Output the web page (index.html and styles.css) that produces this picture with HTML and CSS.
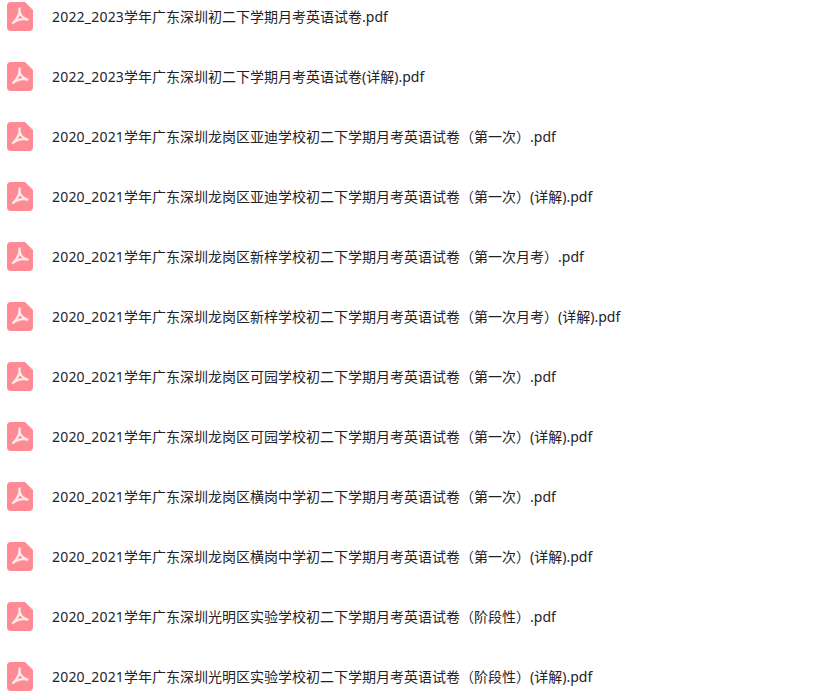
FILE: index.html
```html
<!DOCTYPE html>
<html lang="zh-CN">
<head>
  <meta charset="UTF-8">
  <title>试卷列表</title>
  <link rel="stylesheet" href="styles.css">
</head>
<body>
  <svg class="defs" width="0" height="0" aria-hidden="true">
    <symbol id="pdf" viewBox="0 0 26 29">
      <path d="M4 0H18L26 8V25Q26 29 22 29H4Q0 29 0 25V4Q0 0 4 0Z" fill="#ff8a94"/>
      <path d="M12.5 6.5C13.2 11 10 17 6 21M12.5 6.5C12 11.5 15 16 20.5 17.5M6 21C10 17.5 15 16.5 20.5 17.5" fill="none" stroke="#ffe9eb" stroke-width="2.3" stroke-linecap="round" stroke-linejoin="round"/>
    </symbol>
  </svg>
  <ul class="file-list">
    <li class="file-row"><svg class="file-icon"><use href="#pdf"/></svg><span><span class="year">2022_2023</span>学年广东深圳初二下学期月考英语试卷.pdf</span></li>
    <li class="file-row"><svg class="file-icon"><use href="#pdf"/></svg><span><span class="year">2022_2023</span>学年广东深圳初二下学期月考英语试卷(详解).pdf</span></li>
    <li class="file-row"><svg class="file-icon"><use href="#pdf"/></svg><span><span class="year">2020_2021</span>学年广东深圳龙岗区亚迪学校初二下学期月考英语试卷（第一次）.pdf</span></li>
    <li class="file-row"><svg class="file-icon"><use href="#pdf"/></svg><span><span class="year">2020_2021</span>学年广东深圳龙岗区亚迪学校初二下学期月考英语试卷（第一次）(详解).pdf</span></li>
    <li class="file-row"><svg class="file-icon"><use href="#pdf"/></svg><span><span class="year">2020_2021</span>学年广东深圳龙岗区新梓学校初二下学期月考英语试卷（第一次月考）.pdf</span></li>
    <li class="file-row"><svg class="file-icon"><use href="#pdf"/></svg><span><span class="year">2020_2021</span>学年广东深圳龙岗区新梓学校初二下学期月考英语试卷（第一次月考）(详解).pdf</span></li>
    <li class="file-row"><svg class="file-icon"><use href="#pdf"/></svg><span><span class="year">2020_2021</span>学年广东深圳龙岗区可园学校初二下学期月考英语试卷（第一次）.pdf</span></li>
    <li class="file-row"><svg class="file-icon"><use href="#pdf"/></svg><span><span class="year">2020_2021</span>学年广东深圳龙岗区可园学校初二下学期月考英语试卷（第一次）(详解).pdf</span></li>
    <li class="file-row"><svg class="file-icon"><use href="#pdf"/></svg><span><span class="year">2020_2021</span>学年广东深圳龙岗区横岗中学初二下学期月考英语试卷（第一次）.pdf</span></li>
    <li class="file-row"><svg class="file-icon"><use href="#pdf"/></svg><span><span class="year">2020_2021</span>学年广东深圳龙岗区横岗中学初二下学期月考英语试卷（第一次）(详解).pdf</span></li>
    <li class="file-row"><svg class="file-icon"><use href="#pdf"/></svg><span><span class="year">2020_2021</span>学年广东深圳光明区实验学校初二下学期月考英语试卷（阶段性）.pdf</span></li>
    <li class="file-row"><svg class="file-icon"><use href="#pdf"/></svg><span><span class="year">2020_2021</span>学年广东深圳光明区实验学校初二下学期月考英语试卷（阶段性）(详解).pdf</span></li>
  </ul>
</body>
</html>
```

FILE: styles.css
```css
html, body {
  height: 100%;
  overflow: hidden;
}
body {
  margin: 0;
  background: #fff;
  color: #1f2329;
  font-family: "Noto Sans", "Noto Sans CJK SC", sans-serif;
  font-size: 14px;
}
.defs {
  display: block;
}
.file-list {
  list-style: none;
  margin: -14px 0 0;
  padding: 0 0 0 7px;
}
.file-row {
  display: flex;
  align-items: center;
  gap: 19px;
  height: 60px;
}
.file-icon {
  flex: none;
  width: 26px;
  height: 29px;
  margin-top: 1px;
}
.year {
  letter-spacing: 0.2px;
}
```
